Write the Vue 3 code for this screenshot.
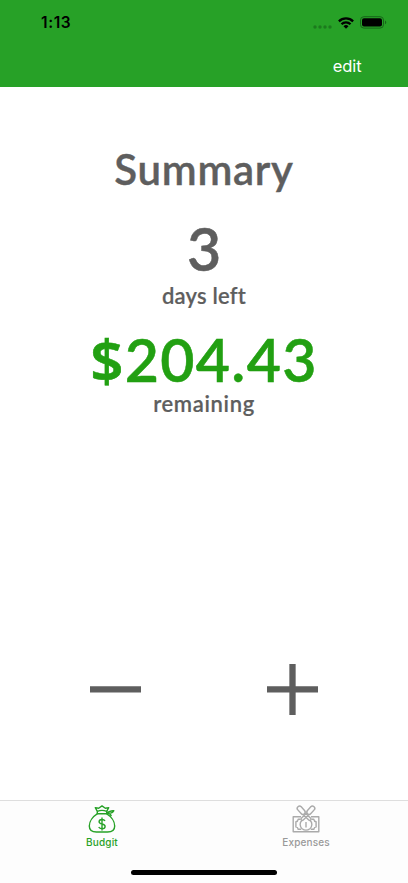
<script setup>
const tabs = [
  { id: 'budgit', label: 'Budgit', active: true },
  { id: 'expenses', label: 'Expenses', active: false },
]
</script>

<template>
  <div class="screen">
    <header class="header">
      <div class="status">
        <span class="time">1:13</span>
        <div class="indicators">
          <svg class="dots" width="19" height="4" viewBox="0 0 19 4" fill="#1c7a1d">
            <circle cx="2" cy="2" r="1.7" /><circle cx="7" cy="2" r="1.7" />
            <circle cx="12" cy="2" r="1.7" /><circle cx="17" cy="2" r="1.7" />
          </svg>
          <svg class="wifi" width="16" height="12" viewBox="0 0 16 12" fill="none" stroke="#000" stroke-width="2.3">
            <path d="M.9 4.400a10 10 0 0 1 14.200 0" />
            <path d="M3.500 7.200a6.300 6.300 0 0 1 9 0" />
            <path d="M8 11.800 5.500 9.300a3.500 3.500 0 0 1 5 0z" fill="#000" stroke="none" />
          </svg>
          <svg width="27" height="13" viewBox="0 0 27 13">
            <rect x=".5" y=".7" width="23" height="11.400" rx="3.400" fill="none" stroke="#176519" />
            <rect x="2" y="2.200" width="20" height="8.400" rx="2" fill="#000" />
            <path d="M25 4.500c1.700.6 1.700 3.200 0 3.800z" fill="#176519" />
          </svg>
        </div>
      </div>
      <div class="nav"><span class="edit">edit</span></div>
    </header>

    <main class="content">
      <h1 class="title">Summary</h1>
      <div class="days">3</div>
      <div class="caption days-label">days left</div>
      <div class="amount"><span class="currency">$</span>204.43</div>
      <div class="caption remaining">remaining</div>
      <div class="actions">
        <svg class="action" viewBox="0 0 51 51"><path d="M0 25.400h51" /></svg>
        <svg class="action" viewBox="0 0 51 51"><path d="M0 25.400h51M25.500 0v51" /></svg>
      </div>
    </main>

    <footer class="footer">
      <nav class="tabs">
        <div v-for="tab in tabs" :key="tab.id" class="tab" :class="{ active: tab.active }">
          <svg v-if="tab.id === 'budgit'" class="icon" viewBox="0 0 30 30">
            <path d="M10.500 9.700C6 12.500 2.300 17.500 2.300 22c0 4.500 3 6 7.200 6h11c4.200 0 7.200-1.500 7.200-6 0-4.500-3.700-9.500-8.200-12.300" />
            <path d="M10.300 7.300 8.300 3.600l3.400.6L15 1.900l3.300 2.300 3.400-.6-2 3.700M10.300 7.300c3-1.200 6.400-1.200 9.400 0v2.400h-9.400z" />
            <path d="M20 8.500c2-.3 4-2.300 6.800-1.700-.8 1.900-3.300 2.700-6.800 2.400 2.300 0 3.800 1 4.300 3" />
            <path d="M18 17c-.5-1-1.500-1.500-3-1.500-1.700 0-2.900.9-2.900 2.200 0 3.200 6 1.500 6 4.700 0 1.400-1.300 2.300-3.100 2.300-1.500 0-2.700-.6-3.300-1.700M15 13.500v13" />
          </svg>
          <svg v-else class="icon" viewBox="0 0 30 30">
            <path d="M10 12.700H2.200v15.100h25.600V12.700H20" />
            <path d="M9.500 15.300H7.200c-.2 1.400-1 2.200-2.300 2.400v5.200c1.300.2 2.100 1 2.300 2.400h3M20.500 15.300h2.300c.2 1.400 1 2.200 2.300 2.400v5.200c-1.300.2-2.100 1-2.300 2.400h-3" />
            <path d="M11 16.200c-2.600 2.300-2.400 6.300.1 8.500 2.300 1.700 5.500 1.700 7.800 0 2.500-2.200 2.700-6.200.1-8.500M15 18v5.500" />
            <rect x="-2.300" y="-4.500" width="4.600" height="9.500" rx="2.300" transform="translate(10 6) rotate(-42)" />
            <rect x="-2.300" y="-4.500" width="4.600" height="9.500" rx="2.300" transform="translate(20 6) rotate(42)" />
            <path d="m12 10.400 6 5.800c1.400.8 2.600-.6 1.700-1.900L14.300 9M18 10.400l-6 5.800c-1.400.8-2.600-.6-1.700-1.900L15.700 9" />
          </svg>
          <span class="label">{{ tab.label }}</span>
        </div>
      </nav>
      <div class="home-bar"></div>
    </footer>
  </div>
</template>

<style>
body { background: #fff; }
</style>

<style scoped>
.screen {
  display: flex;
  flex-direction: column;
  width: 408px;
  height: 883px;
  overflow: hidden;
  background: #fff;
  font-family: Inter, "Liberation Sans", sans-serif;
}
.header { height: 87px; background: #27a127; flex: none; }
.status {
  display: flex;
  justify-content: space-between;
  align-items: center;
  height: 45px;
  padding: 0 21px 0 41px;
}
.time { font-size: 15.500px; font-weight: 600; line-height: 20px; letter-spacing: .6px; color: #000; }
.indicators { display: flex; align-items: center; }
.dots { margin: 8px 6px 0 0; }
.wifi { margin-right: 6px; }
.nav {
  display: flex;
  justify-content: flex-end;
  padding: 11px 46.500px 0 0;
}
.edit { color: #fff; font-size: 16.500px; line-height: 20px; letter-spacing: -.1px; }
.content {
  display: flex;
  flex-direction: column;
  align-items: center;
  height: 713px;
  flex: none;
  color: #5e5e5e;
  font-family: Lato, "Open Sans", sans-serif;
  font-weight: 600;
  white-space: nowrap;
}
.title {
  margin: 57px 0 0;
  font-size: 42px;
  line-height: 50px;
  font-weight: 600;
  letter-spacing: .7px;
  -webkit-text-stroke: .4px currentColor;
}
.days { margin-top: 27px; font-size: 59px; line-height: 56px; -webkit-text-stroke: .5px currentColor; }
.caption { font-size: 22px; line-height: 26px; letter-spacing: .2px; -webkit-text-stroke: .2px currentColor; }
.days-label { margin-top: 6px; }
.amount {
  height: 56px;
  margin-top: 23px;
  font-size: 59px;
  line-height: 56px;
  letter-spacing: 1.300px;
  color: #22a012;
  -webkit-text-stroke: .5px currentColor;
}
.currency { font-family: "Noto Sans", "Open Sans", sans-serif; font-size: 58px; line-height: 1px; }
.remaining { margin-top: 3px; letter-spacing: .65px; }
.actions {
  display: flex;
  justify-content: space-between;
  width: 228px;
  margin-top: auto;
  padding-bottom: 85px;
}
.action { width: 51px; height: 51px; fill: none; stroke: #5e5e5e; stroke-width: 6.300; }
.footer {
  display: flex;
  flex-direction: column;
  align-items: center;
  height: 83px;
  box-sizing: border-box;
  border-top: 1px solid #dedede;
  background: #fdfdfd;
}
.tabs { display: grid; grid-template-columns: 1fr 1fr; width: 408px; }
.tab { display: flex; flex-direction: column; align-items: center; color: #999; padding-top: 3px; }
.tab.active { color: #27a127; }
.icon { width: 30px; height: 30px; fill: none; stroke: currentColor; stroke-width: 1.400; stroke-linejoin: round; }
.tab:not(.active) .icon { stroke: #aaa; }
.label { font-size: 10px; line-height: 12px; margin-top: 2px; font-weight: 500; letter-spacing: .15px; }
.home-bar { width: 146px; height: 5px; margin-top: 22px; border-radius: 3px; background: #000; }
</style>
